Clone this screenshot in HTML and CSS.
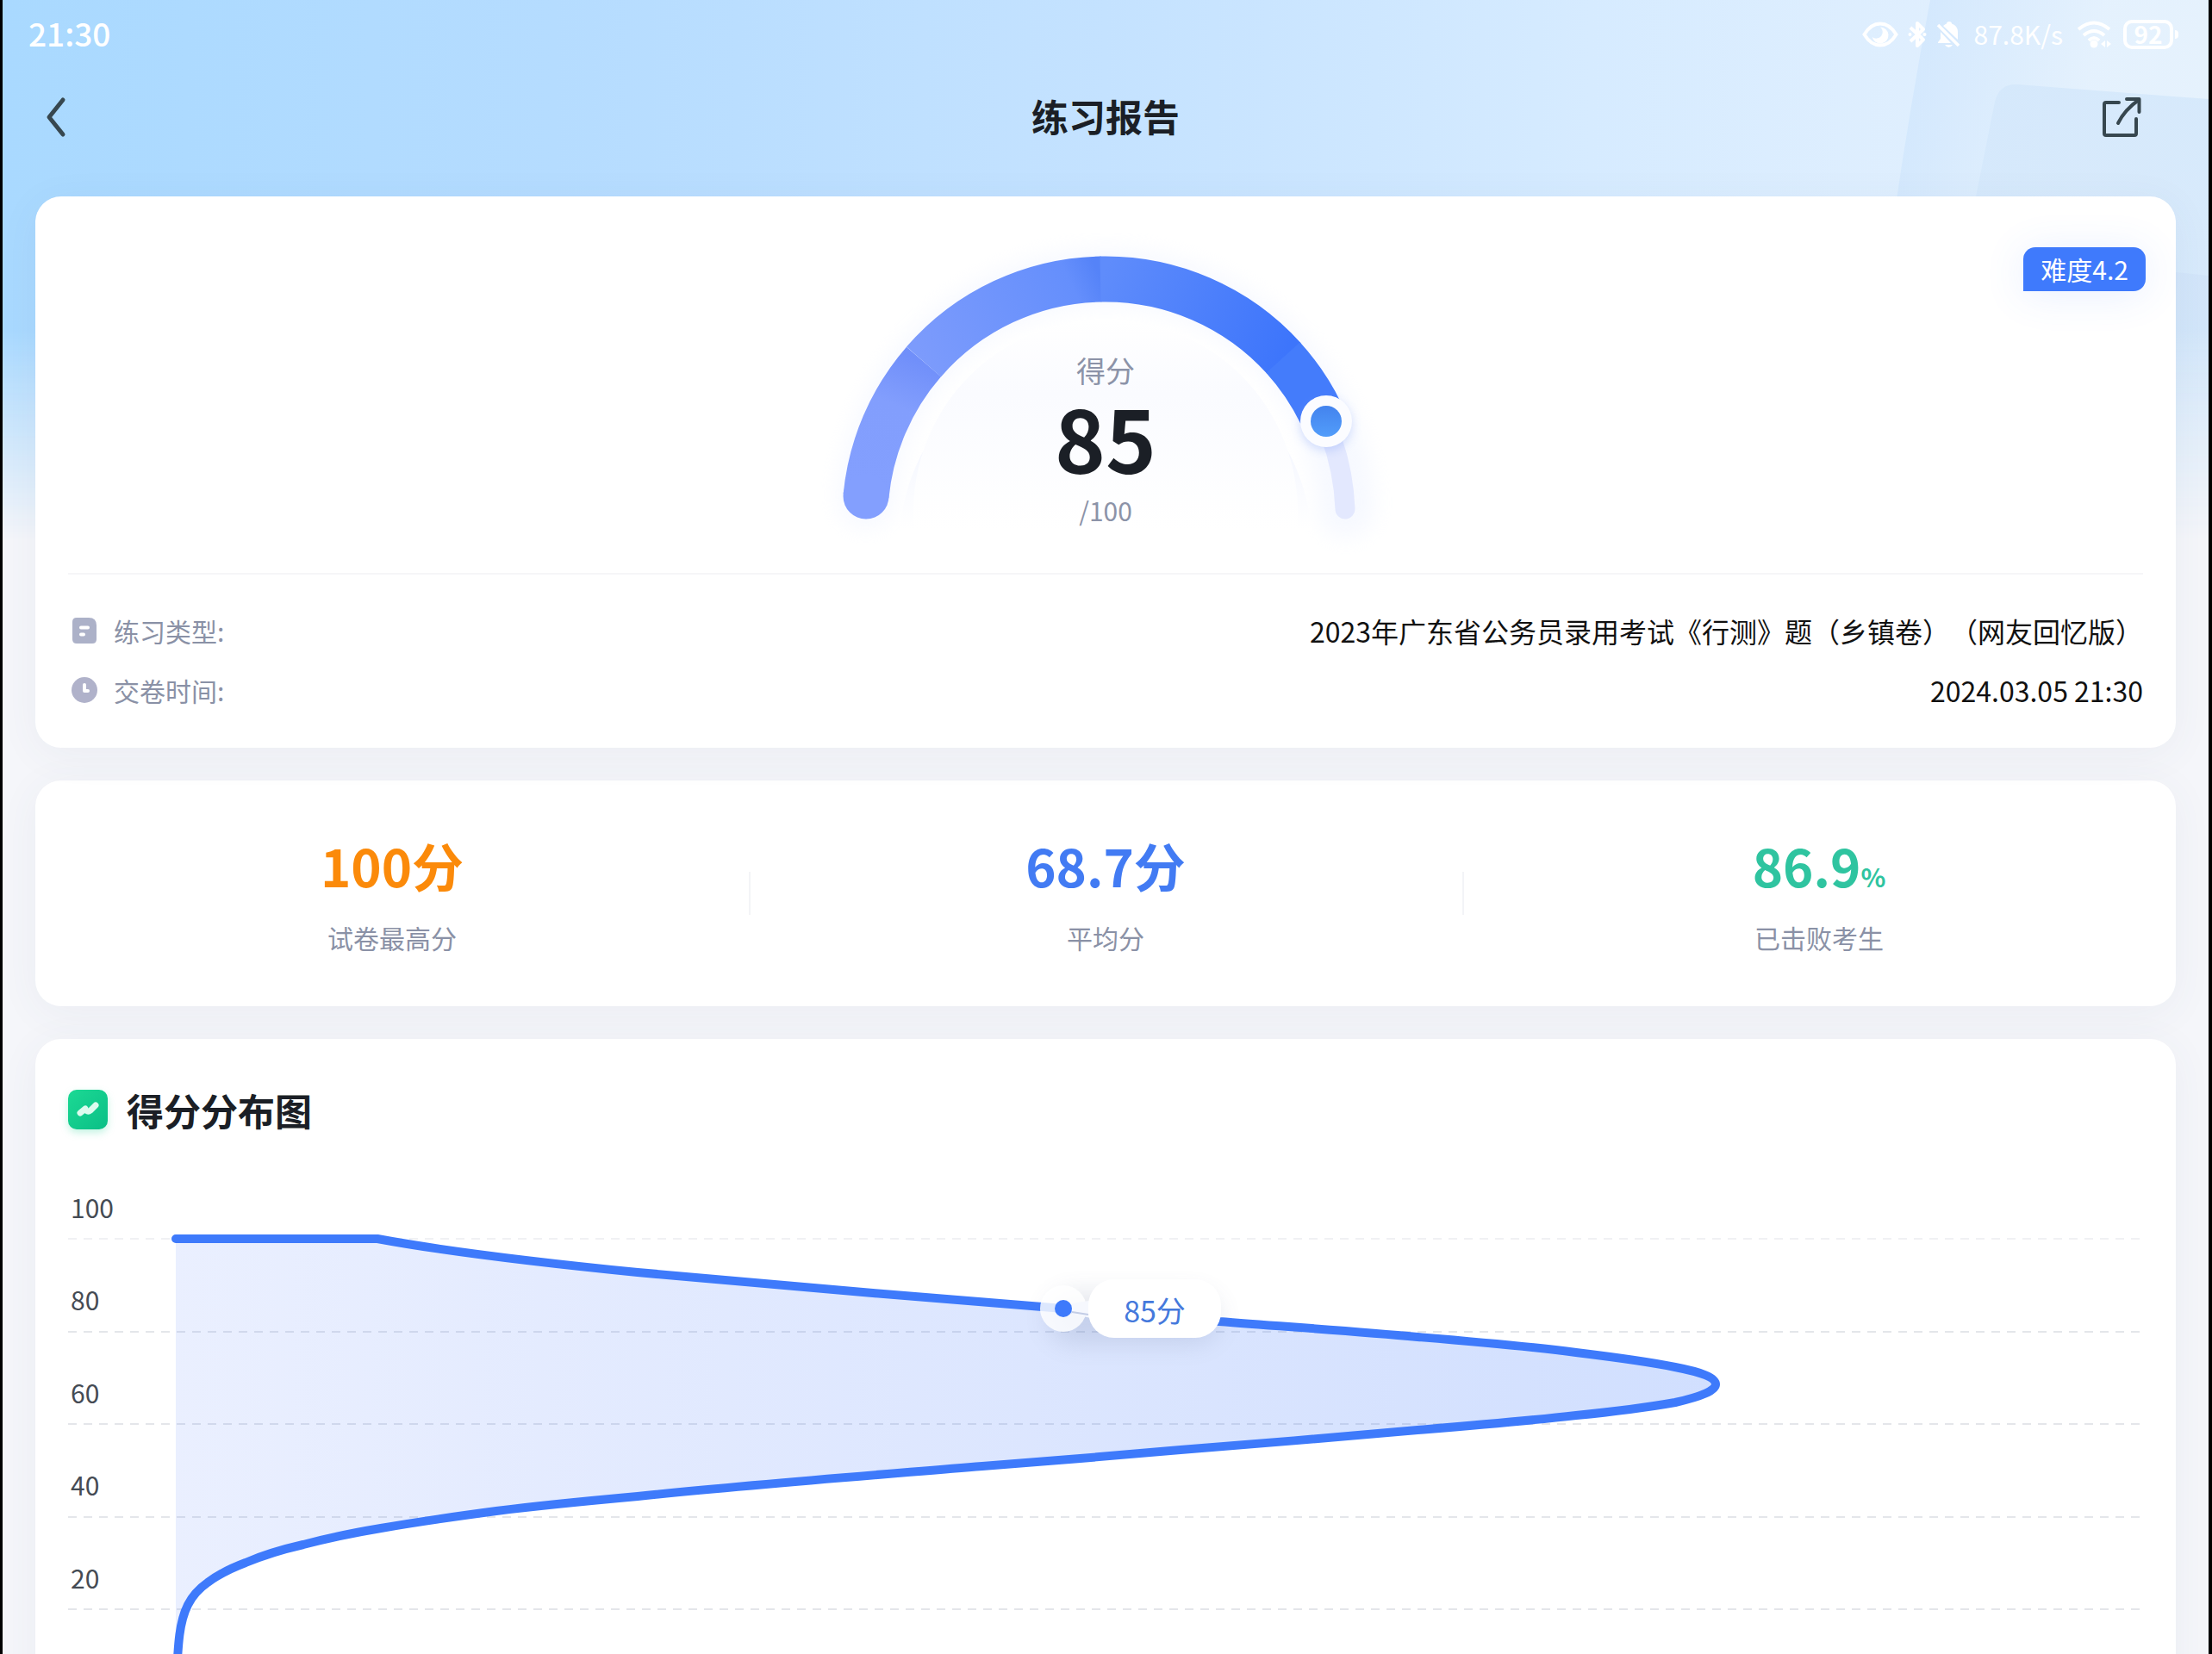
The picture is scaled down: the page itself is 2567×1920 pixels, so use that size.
FILE: index.html
```html
<!DOCTYPE html>
<html lang="zh-CN">
<head>
<meta charset="utf-8">
<meta name="viewport" content="width=device-width, initial-scale=1">
<title>练习报告</title>
<link rel="stylesheet" href="styles.css">
</head>
<body>
<div class="app">
  <div class="backdrop" aria-hidden="true">
    <svg class="backdrop-art" width="380" height="640" viewBox="0 0 380 640">
      <defs>
        <linearGradient id="panelA" x1="0" y1="0" x2="1" y2="0.3">
          <stop offset="0" stop-color="#c8e2fd"/>
          <stop offset="0.65" stop-color="#e6f2fd"/>
          <stop offset="1" stop-color="#e8f3fd"/>
        </linearGradient>
        <linearGradient id="panelB" x1="0" y1="0" x2="0" y2="1">
          <stop offset="0" stop-color="#d3e7fb"/>
          <stop offset="1" stop-color="#d6eafc"/>
        </linearGradient>
        <linearGradient id="panelC" x1="0" y1="0" x2="0" y2="1">
          <stop offset="0" stop-color="#cfe2f8" stop-opacity="0.6"/>
          <stop offset="1" stop-color="#d2eafc"/>
        </linearGradient>
      </defs>
      <path d="M57 0H380V640H-30Q0 300 57 0Z" fill="url(#panelA)" opacity="0.8"/>
      <path d="M110 228L132 118Q137 97 158 98L380 115V640H60Z" fill="url(#panelB)" opacity="0.8"/>
      <path d="M200 300L380 320V640H180Z" fill="url(#panelC)"/>
    </svg>
  </div>

  <header class="top">
    <div class="status">
      <span class="clock">21:30</span>
      <div class="status-icons">
        <svg width="42" height="30" viewBox="0 0 42 30" class="ic-eye">
          <path d="M2.500 15Q10 2.500 21 2.500T39.500 15Q32 27.500 21 27.500T2.500 15Z" fill="none" stroke="#fff" stroke-width="4"/>
          <path d="M21 6.500a9.500 9.500 0 1 1-9.300 11.500a6 6 0 0 0 9.300-11.500Z" fill="#fff"/>
        </svg>
        <svg width="22" height="32" viewBox="0 0 22 32" class="ic-bt">
          <path d="M3 8L18 22L11 29V3L18 10L3 24" fill="none" stroke="#fff" stroke-width="4" stroke-linejoin="round"/>
          <circle cx="2.500" cy="16" r="2" fill="#fff"/><circle cx="19.500" cy="16" r="2" fill="#fff"/>
        </svg>
        <svg width="28" height="32" viewBox="0 0 28 32" class="ic-bell">
          <path d="M2 25L5 21V13L17 26H2Z" fill="#fff"/>
          <path d="M8 6Q10 4 12 3.500Q12 1 15 1T18 3.500Q25 6 25 13V22Z" fill="#fff"/>
          <path d="M10 28H19Q17 31 14.500 31T10 28Z" fill="#fff"/>
          <path d="M2 5L26 29" stroke="#fff" stroke-width="3.500"/>
        </svg>
        <span class="speed">87.8K/s</span>
        <svg width="42" height="32" viewBox="0 0 42 32" class="ic-wifi">
          <path d="M2 10Q20 -5 38 10M8 17Q20 7 32 17M14 23Q20 17 26 23" fill="none" stroke="#fff" stroke-width="4"/>
          <circle cx="20" cy="27" r="4.500" fill="#fff"/>
          <path d="M33 23V31L28 27ZM35 23V31L40 27Z" fill="#fff"/>
        </svg>
        <span class="battery">92</span>
      </div>
    </div>
    <nav class="nav">
      <button class="icon-btn back" type="button" aria-label="返回">
        <svg width="24" height="48" viewBox="0 0 24 48"><path d="M20 4L4 24L20 44" fill="none" stroke="#37474f" stroke-width="5" stroke-linecap="round" stroke-linejoin="round"/></svg>
      </button>
      <h1>练习报告</h1>
      <button class="icon-btn share" type="button" aria-label="分享">
        <svg width="48" height="48" viewBox="0 0 48 48"><g fill="none" stroke="#37474f" stroke-width="4" stroke-linecap="round" stroke-linejoin="round"><path d="M21 7H6Q4 7 4 9V43Q4 45 6 45H39Q41 45 41 43V26"/><path d="M30 3H44.500V18"/><path d="M44 4Q28 15 20 31"/></g></svg>
      </button>
    </nav>
  </header>

  <main>
    <section class="card score-card">
      <span class="badge">难度4.2</span>
      <div class="gauge">
        <svg width="684" height="380" viewBox="0 0 684 380" aria-hidden="true">
          <defs>
            <linearGradient id="g1" gradientUnits="userSpaceOnUse" x1="65" y1="306" x2="131" y2="150"><stop offset="0" stop-color="#839ffe"/><stop offset="0.65" stop-color="#829efd"/><stop offset="1" stop-color="#708ffa"/></linearGradient>
            <linearGradient id="g2" gradientUnits="userSpaceOnUse" x1="131" y1="150" x2="337" y2="54"><stop offset="0" stop-color="#7c9bfc"/><stop offset="0.85" stop-color="#658ffc"/><stop offset="1" stop-color="#5583f8"/></linearGradient>
            <linearGradient id="g3" gradientUnits="userSpaceOnUse" x1="337" y1="54" x2="549" y2="146"><stop offset="0" stop-color="#5f8cfb"/><stop offset="1" stop-color="#3d75fb"/></linearGradient>
            <linearGradient id="knob" x1="0" y1="0" x2="0" y2="1"><stop offset="0" stop-color="#4383ee"/><stop offset="1" stop-color="#529dfa"/></linearGradient>
            <linearGradient id="dial" x1="0" y1="0" x2="0" y2="1"><stop offset="0" stop-color="#fff"/><stop offset="0.35" stop-color="#fafbff"/><stop offset="1" stop-color="#fff"/></linearGradient>
            <linearGradient id="ring" x1="0" y1="0" x2="0" y2="1"><stop offset="0" stop-color="#eff2fc"/><stop offset="0.6" stop-color="#f6f8ff"/><stop offset="1" stop-color="#fff"/></linearGradient>
            <filter id="soft" x="-20%" y="-20%" width="140%" height="140%"><feGaussianBlur stdDeviation="12"/></filter>
            <filter id="edge" x="-20%" y="-20%" width="140%" height="140%"><feGaussianBlur stdDeviation="6"/></filter>
          </defs>
          <path d="M64 310A279 279 0 0 1 621 321" fill="none" stroke="#eaf0ff" stroke-width="66" stroke-linecap="round" opacity="0.4" filter="url(#soft)"/>
          <path d="M103 345A240 240 0 0 1 581 345Z" fill="url(#ring)"/>
          <path d="M120 345A223 223 0 1 1 564 345Z" fill="url(#dial)"/>
          <path d="M596 218A279 279 0 0 1 620 321" fill="none" stroke="#e3e8fe" stroke-width="23" stroke-linecap="round"/>
          <path d="M64 306A279 279 0 0 1 131 150" fill="none" stroke="url(#g1)" stroke-width="53"/>
          <circle cx="64" cy="306" r="26.500" fill="#839ffe"/>
          <path d="M131 150A279 279 0 0 1 337 54" fill="none" stroke="url(#g2)" stroke-width="53"/>
          <path d="M336 54A279 279 0 0 1 549 146" fill="none" stroke="url(#g3)" stroke-width="53"/>
          <path d="M548 145A279 279 0 0 1 592 210" fill="none" stroke="#447cfb" stroke-width="53"/>
          <circle cx="598" cy="223" r="30" fill="#6f93f5" opacity="0.3" filter="url(#edge)"/>
          <circle cx="598" cy="219" r="30" fill="#fbfcff"/>
          <circle cx="598" cy="219" r="18" fill="url(#knob)"/>
        </svg>
        <div class="gauge-text">
          <span class="gauge-label">得分</span>
          <strong>85</strong>
          <span class="gauge-total">/100</span>
        </div>
      </div>
      <dl class="facts">
        <div>
          <dt><svg width="30" height="32" viewBox="0 0 30 32"><path d="M6 1H20Q29 1 29 10V26Q29 31 24 31H6Q1 31 1 26V6Q1 1 6 1Z" fill="#acb1c8"/><path d="M11 12.500H19M11 20.500H14" stroke="#fff" stroke-width="4" stroke-linecap="round"/></svg>练习类型:</dt>
          <dd>2023年广东省公务员录用考试《行测》题（乡镇卷）（网友回忆版）</dd>
        </div>
        <div>
          <dt><svg width="30" height="32" viewBox="0 0 30 32"><circle cx="15" cy="16" r="15" fill="#b0b2ca"/><path d="M15 10V17H19" fill="none" stroke="#fff" stroke-width="4" stroke-linecap="round" stroke-linejoin="round"/></svg>交卷时间:</dt>
          <dd>2024.03.05 21:30</dd>
        </div>
      </dl>
    </section>

    <section class="card stats">
      <div class="stat"><strong class="orange">100分</strong><span>试卷最高分</span></div>
      <div class="stat"><strong class="blue">68.7分</strong><span>平均分</span></div>
      <div class="stat"><strong class="green">86.9<small>%</small></strong><span>已击败考生</span></div>
    </section>

    <section class="card dist">
      <h2>
        <svg width="46" height="46" viewBox="0 0 46 46" aria-hidden="true"><defs><linearGradient id="gi" x1="0" y1="0" x2="1" y2="1"><stop offset="0" stop-color="#1cd994"/><stop offset="1" stop-color="#0abf86"/></linearGradient></defs><rect width="46" height="46" rx="10" fill="url(#gi)"/><path d="M14 27L20 22Q22 27 26 24L32 18" fill="none" stroke="#dcfbee" stroke-width="7" stroke-linecap="round" stroke-linejoin="round"/></svg>
        得分分布图
      </h2>
      <svg class="chart" viewBox="79 1370 2404 620" role="img" aria-label="得分分布图">
        <defs>
          <linearGradient id="area" x1="0" y1="0" x2="1" y2="0"><stop offset="0" stop-color="#3f6ffc" stop-opacity="0.11"/><stop offset="1" stop-color="#3f7afc" stop-opacity="0.24"/></linearGradient>
          <filter id="tip" x="-50%" y="-60%" width="200%" height="250%"><feGaussianBlur stdDeviation="14"/></filter>
        </defs>
        <g class="grid-lines">
          <path class="faint" d="M79 1438H2483"/>
          <path d="M79 1546H2483M79 1653H2483M79 1761H2483M79 1868H2483M79 1976H2483"/>
        </g>
        <g class="axis">
          <text x="82" y="1414">100</text>
          <text x="82" y="1521">80</text>
          <text x="82" y="1629">60</text>
          <text x="82" y="1736">40</text>
          <text x="82" y="1844">20</text>
        </g>
        <path fill="url(#area)" d="M204 1438H438C530 1455 640 1467 740 1477C880 1490 1080 1507 1234 1519C1295 1524 1355 1529 1415 1534C1490 1540 1570 1545 1645 1552C1706 1557 1768 1562 1829 1570C1870 1575 1910 1580 1944 1587C1975 1593 1991 1599 1991 1607C1991 1614 1975 1621 1944 1628C1910 1634 1870 1639 1829 1643C1768 1650 1706 1655 1645 1660C1553 1668 1462 1676 1370 1683C1293 1690 1217 1696 1140 1702C1007 1713 873 1723 740 1737C685 1742 631 1747 576 1754C531 1760 487 1766 442 1774C412 1779 382 1785 352 1793C330 1798 306 1805 285 1814C269 1820 253 1828 241 1837C231 1844 223 1853 218 1863C209 1881 206 1900 204 1976Z"/>
        <path class="curve" d="M204 1438H438C530 1455 640 1467 740 1477C880 1490 1080 1507 1234 1519C1295 1524 1355 1529 1415 1534C1490 1540 1570 1545 1645 1552C1706 1557 1768 1562 1829 1570C1870 1575 1910 1580 1944 1587C1975 1593 1991 1599 1991 1607C1991 1614 1975 1621 1944 1628C1910 1634 1870 1639 1829 1643C1768 1650 1706 1655 1645 1660C1553 1668 1462 1676 1370 1683C1293 1690 1217 1696 1140 1702C1007 1713 873 1723 740 1737C685 1742 631 1747 576 1754C531 1760 487 1766 442 1774C412 1779 382 1785 352 1793C330 1798 306 1805 285 1814C269 1820 253 1828 241 1837C231 1844 223 1853 218 1863C209 1881 206 1900 204 1976"/>
        <rect x="1215" y="1500" width="200" height="60" rx="30" fill="#5b6a90" opacity="0.16" filter="url(#tip)"/>
        <circle cx="1234" cy="1519" r="27" fill="#fff" opacity="0.82"/>
        <path d="M1244 1513L1270 1509V1531L1244 1525Z" fill="#f6f8fe"/>
        <path d="M1244 1523L1263 1526" stroke="#c3cde6" stroke-width="2"/>
        <circle cx="1234" cy="1519" r="10" fill="#3e7afb"/>
        <rect x="1263" y="1485" width="154" height="68" rx="30" fill="#fff"/>
        <text class="tip-text" x="1340" y="1535">85分</text>
      </svg>
    </section>
  </main>
</div>
</body>
</html>
```

FILE: styles.css
```css
* {
  box-sizing: border-box;
}

body {
  margin: 0;
  padding: 0 4px 0 3px;
  background: #000;
  color: #1b1f26;
  font-family: "Noto Sans CJK SC", "Noto Sans", sans-serif;
}

h1, h2, dl, dd {
  margin: 0;
}

.app {
  position: relative;
  height: 100vh;
  overflow: hidden;
  background: #f5f6fa;
}

/* Sky-blue header wash that fades into the page colour */
.backdrop {
  position: absolute;
  inset: 0 0 auto 0;
  height: 640px;
  background: linear-gradient(90deg, #a9d9ff 0%, #b5dcff 25%, #c4e2ff 50%, #d6ebff 72%, #e0effe 88%, #dcedfd 100%);
  -webkit-mask-image: linear-gradient(#000 60%, transparent 98%);
  mask-image: linear-gradient(#000 60%, transparent 98%);
}

.backdrop-art {
  position: absolute;
  top: 0;
  right: 0;
}

.top,
main {
  position: relative;
}

.status {
  display: flex;
  align-items: center;
  justify-content: space-between;
  height: 80px;
  padding: 0 34px 0 30px;
  color: #fff;
}

.clock {
  padding-bottom: 4px;
  font-size: 37px;
  font-weight: 500;
}

.status-icons {
  display: flex;
  align-items: center;
}

.ic-bt {
  margin-left: 11px;
}

.ic-bell {
  margin-left: 11px;
}

.speed {
  margin-left: 16px;
  padding-bottom: 2px;
  font-size: 30px;
}

.ic-wifi {
  margin: 0 12px 0 16px;
}

.battery {
  position: relative;
  width: 58px;
  margin-right: 7px;
  border: 4px solid #fff;
  border-radius: 10px;
  font-size: 28px;
  font-weight: 700;
  line-height: 24px;
  padding-bottom: 2px;
  text-align: center;
}

.battery::after {
  content: "";
  position: absolute;
  top: 8px;
  right: -10px;
  width: 4px;
  height: 10px;
  border-radius: 0 4px 4px 0;
  background: #fff;
}

.nav {
  display: grid;
  grid-template-columns: 1fr auto 1fr;
  align-items: center;
  height: 112px;
  padding: 0 50px;
}

.nav h1 {
  padding-bottom: 4px;
  font-size: 43px;
  font-weight: 700;
  line-height: 60px;
}

.icon-btn {
  display: flex;
  padding: 0;
  border: 0;
  background: none;
}

.share {
  justify-self: end;
  margin-right: 27px;
}

main {
  display: flex;
  flex-direction: column;
  gap: 38px;
  padding: 36px 38px 38px;
}

.card {
  border-radius: 30px;
  background: #fff;
  box-shadow: 0 8px 48px rgba(70, 80, 120, 0.06);
}

.score-card {
  position: relative;
  padding: 42px 38px 33px;
}

.badge {
  position: absolute;
  top: 59px;
  right: 35px;
  padding: 0 20px;
  border-radius: 14px 14px 14px 0;
  background: #3f7afc;
  box-shadow: 0 4px 48px rgba(63, 122, 252, 0.12);
  color: #fff;
  font-size: 30px;
  line-height: 51px;
}

.gauge {
  display: grid;
  justify-content: center;
}

.gauge svg,
.gauge-text {
  grid-area: 1 / 1;
}

.gauge-text {
  display: flex;
  flex-direction: column;
  align-items: center;
  padding-top: 136px;
  color: #8c93a8;
}

.gauge-label {
  font-size: 34px;
  line-height: 48px;
}

.gauge-text strong {
  color: #1b1f26;
  font-size: 100px;
  font-weight: 700;
  line-height: 106px;
}

.gauge-total {
  font-size: 30px;
  line-height: 64px;
}

.facts {
  margin-top: 15px;
  padding-top: 30px;
  border-top: 2px solid #f6f6f8;
}

.facts div {
  display: flex;
  align-items: center;
  justify-content: space-between;
  height: 69px;
  padding-left: 4px;
}

.facts dt {
  display: flex;
  align-items: center;
  gap: 19px;
  color: #8a91a6;
  font-size: 30px;
}

.facts dd {
  color: #111;
  font-size: 32px;
  text-spacing-trim: space-all;
}

.stats {
  display: grid;
  grid-template-columns: repeat(3, 1fr);
  align-items: center;
  padding: 56px 0 58px;
}

.stat {
  position: relative;
  display: flex;
  flex-direction: column;
  align-items: center;
  gap: 20px;
}

.stat + .stat::before {
  content: "";
  position: absolute;
  top: 50px;
  left: 0;
  width: 2px;
  height: 50px;
  background: #f3f4f7;
}

.stat strong {
  font-size: 60px;
  line-height: 84px;
}

.stat small {
  font-size: 30px;
  line-height: 30px;
}

.stat span {
  color: #8a91a6;
  font-size: 30px;
  line-height: 44px;
}

.stat .orange {
  color: #fb8a0a;
}

.stat .blue {
  color: #427bf3;
}

.stat .green {
  color: #2fc4a0;
}

.dist {
  padding: 52px 42px 38px 38px;
}

.dist h2 {
  display: flex;
  align-items: center;
  gap: 22px;
  font-size: 43px;
  font-weight: 700;
  line-height: 60px;
}

.dist h2 svg {
  filter: drop-shadow(0 4px 4px rgba(20, 210, 145, 0.25));
}

.chart {
  display: block;
  width: 100%;
  height: auto;
  margin-top: 52px;
}

.grid-lines path {
  fill: none;
  stroke: #e4e6ea;
  stroke-width: 2;
  stroke-dasharray: 10 8;
}

.grid-lines .faint {
  stroke: #f0f1f4;
}

.axis text {
  fill: #454b54;
  font-size: 30px;
}

.curve {
  fill: none;
  stroke: #3e7afb;
  stroke-width: 10;
  stroke-linecap: round;
  stroke-linejoin: round;
}

.tip-text {
  fill: #4579dc;
  font-size: 34px;
  text-anchor: middle;
}
```
